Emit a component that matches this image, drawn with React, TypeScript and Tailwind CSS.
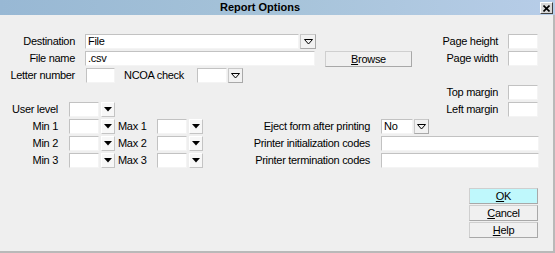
import React from 'react';

const FONT = "font-['Liberation_Sans',Arial,sans-serif]";

function Box({ w, value }: { w: string; value?: string }) {
  return (
    <div
      className={`${w} h-[15px] shrink-0 bg-white border-t border-l border-[#c2c2c2] border-r border-r-[#f4f4f4] border-b border-b-[#f4f4f4] pl-[2px] leading-[13px] text-black`}
    >
      {value}
    </div>
  );
}

function HollowArrow({ w = 'w-[16px]' }: { w?: string }) {
  return (
    <div
      className={`${w} h-[15px] shrink-0 ml-[1px] flex items-center justify-center bg-[#f2f2f2] border border-[#c8c8c8] border-r-[#a9a9a9] border-b-[#a9a9a9]`}
    >
      <svg width="9" height="6" viewBox="0 0 9 6">
        <polygon points="0.5,0.5 8.5,0.5 4.5,5" fill="none" stroke="#000" strokeWidth="1" />
      </svg>
    </div>
  );
}

function SolidArrow() {
  return (
    <div className="w-[14px] h-[15px] shrink-0 ml-[2px] flex items-center justify-center bg-[#f7f7f7] border border-white border-r-[#c4c4c4] border-b-[#c4c4c4]">
      <svg width="8" height="5" viewBox="0 0 8 5">
        <polygon points="0,0 8,0 4,4.5" fill="#000" />
      </svg>
    </div>
  );
}

function Label({ w, children, right = true }: { w: string; children: React.ReactNode; right?: boolean }) {
  return (
    <span className={`${w} shrink-0 whitespace-nowrap ${right ? 'text-right' : 'text-left'}`}>{children}</span>
  );
}

function Btn({ children, w, ok }: { children: React.ReactNode; w: string; ok?: boolean }) {
  return (
    <div
      className={`${w} h-[16px] flex items-center justify-center leading-[14px] border border-[#cfcfcf] border-r-[#a8a8a8] border-b-[#a8a8a8] ${
        ok ? 'bg-[#bff8fc] border-[#a8a8a8]' : 'bg-[#f0f0f0]'
      }`}
    >
      {children}
    </div>
  );
}

function RightField({ label }: { label: string }) {
  return (
    <div className="ml-auto flex items-center">
      <span className="whitespace-nowrap">{label}</span>
      <div className="ml-[10px]">
        <Box w="w-[30px]" />
      </div>
    </div>
  );
}

function MinMax({ n }: { n: number }) {
  return (
    <div className="flex items-center">
      <Label w="w-[58px]">Min {n}</Label>
      <div className="ml-[11px] flex items-center">
        <Box w="w-[30px]" />
        <SolidArrow />
      </div>
      <Label w="w-[32px]" right={false}>
        <span className="ml-[3px]">Max {n}</span>
      </Label>
      <div className="ml-[10px] flex items-center">
        <Box w="w-[30px]" />
        <SolidArrow />
      </div>
    </div>
  );
}

export default function App() {
  return (
    <div className={`w-[555px] h-[253px] bg-[#efefef] text-[11px] text-black ${FONT}`}>
      <div className="h-[15px] flex items-center bg-gradient-to-r from-[#98b8d4] via-[#a6c3d9] to-[#b7cde8]">
        <span className="ml-[220px] font-bold text-[11px] leading-[15px]">Report Options</span>
        <div className="ml-auto mr-[2px] mt-[1px] w-[13px] h-[12px] flex items-center justify-center bg-[#d8d8d8] border border-white border-r-[#404040] border-b-[#404040]">
          <svg width="7" height="7" viewBox="0 0 7 7">
            <path d="M0.5 0.5 L6.5 6.5 M6.5 0.5 L0.5 6.5" stroke="#000" strokeWidth="1.6" />
          </svg>
        </div>
      </div>

      <div className="h-[238px] border-r-2 border-b-2 border-[#b9b9b9] pt-[19px] flex flex-col leading-[15px] tracking-[-0.3px]">
        <div className="flex flex-col gap-[2px]">
          {/* row 0 */}
          <div className="h-[15px] flex items-center pr-[15px]">
            <Label w="w-[75px]">Destination</Label>
            <div className="ml-[10px] flex items-center">
              <Box w="w-[214px]" value="File" />
              <HollowArrow />
            </div>
            <RightField label="Page height" />
          </div>
          {/* row 1 */}
          <div className="h-[15px] flex items-center pr-[15px]">
            <Label w="w-[75px]">File name</Label>
            <div className="ml-[10px]">
              <Box w="w-[230px]" value=".csv" />
            </div>
            <div className="ml-[10px]">
              <Btn w="w-[87px]">
                <span>
                  <u>B</u>rowse
                </span>
              </Btn>
            </div>
            <RightField label="Page width" />
          </div>
          {/* row 2 */}
          <div className="h-[15px] flex items-center pr-[15px]">
            <Label w="w-[75px]">Letter number</Label>
            <div className="ml-[11px]">
              <Box w="w-[29px]" />
            </div>
            <Label w="w-[82px]" right={false}>
              <span className="ml-[9px]">NCOA check</span>
            </Label>
            <div className="flex items-center">
              <Box w="w-[30px]" />
              <HollowArrow w="w-[15px]" />
            </div>
          </div>
          {/* row 3 */}
          <div className="h-[15px] flex items-center pr-[15px]">
            <RightField label="Top margin" />
          </div>
          {/* row 4 */}
          <div className="h-[15px] flex items-center pr-[15px]">
            <Label w="w-[58px]">User level</Label>
            <div className="ml-[11px] flex items-center">
              <Box w="w-[30px]" />
              <SolidArrow />
            </div>
            <RightField label="Left margin" />
          </div>
          {/* rows 5-7 */}
          {[1, 2, 3].map((n) => (
            <div key={n} className="h-[15px] flex items-center pr-[15px]">
              <MinMax n={n} />
              <div className="ml-[47px] flex items-center">
                <Label w="w-[120px]">
                  {n === 1 ? 'Eject form after printing' : n === 2 ? 'Printer initialization codes' : 'Printer termination codes'}
                </Label>
                <div className="ml-[11px] flex items-center">
                  {n === 1 ? (
                    <>
                      <Box w="w-[32px]" value="No" />
                      <HollowArrow w="w-[15px]" />
                    </>
                  ) : (
                    <Box w="w-[158px]" />
                  )}
                </div>
              </div>
            </div>
          ))}
        </div>

        <div className="mt-[20px] pr-[15px] flex flex-col items-end gap-[1px]">
          <Btn w="w-[69px]" ok>
            <span>
              <u>O</u>K
            </span>
          </Btn>
          <Btn w="w-[69px]">
            <span>
              <u>C</u>ancel
            </span>
          </Btn>
          <Btn w="w-[69px]">
            <span>
              <u>H</u>elp
            </span>
          </Btn>
        </div>
      </div>
    </div>
  );
}
